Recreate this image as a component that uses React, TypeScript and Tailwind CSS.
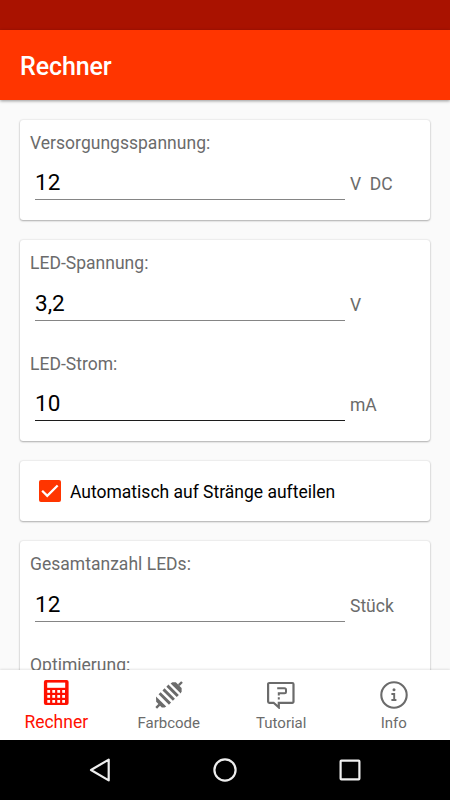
import type { ReactNode } from 'react';

type FieldProps = {
  label: string;
  value: string;
  unit: string;
  focused?: boolean;
};

function Field({ label, value, unit, focused }: FieldProps) {
  return (
    <div className="h-[100.4px] px-2.5 pt-3">
      <p className="h-[22px] text-[17.5px] leading-[22px] tracking-[0.02px] text-[#6b6b6b]">{label}</p>
      <div className="mt-[8.3px] flex items-end">
        <div
          className={`ml-[5px] h-[38px] w-[310px] border-b text-[22.5px] leading-[40px] text-black ${
            focused ? 'border-[#1c1c1c]' : 'border-[#858585]'
          }`}
        >
          {value}
        </div>
        <span className="ml-[5px] mb-[5px] whitespace-pre text-[17.5px] leading-[22px] text-[#6b6b6b]">{unit}</span>
      </div>
    </div>
  );
}

function Card({ children }: { children: ReactNode }) {
  return (
    <section className="shrink-0 rounded-[3px] bg-white shadow-[0_1px_2px_rgba(0,0,0,0.28),0_0_2px_rgba(0,0,0,0.16)]">
      {children}
    </section>
  );
}

function CalculatorIcon() {
  return (
    <svg width="28" height="28" viewBox="0 0 28 28">
      <rect x="1.9" y="2" width="24.7" height="25" rx="2" fill="#ff1000" />
      <rect x="5.2" y="4.6" width="18" height="5.2" fill="#fff" />
      {[12, 17, 22].map(y =>
        [5.3, 10.3, 15.3, 20.2].map(x => <rect key={`${x}-${y}`} x={x} y={y} width="2.8" height="2.8" fill="#fff" />),
      )}
    </svg>
  );
}

function ResistorIcon() {
  return (
    <svg width="28" height="28" viewBox="0 0 28 28" fill="none" stroke="#6b6b6b">
      <path d="M1.2 26.8 4.4 23.6M23.8 4.2 27 1" strokeWidth="2.4" />
      <path d="M1 15.4 11.2 25.6 9.6 26.4H6.8L1.2 20.8Z" fill="#6b6b6b" stroke="none" />
      <path d="M4.6 12.2 15 22.6M8.5 8.4 18.9 18.8M12.4 4.6 22.8 15" strokeWidth="2.9" />
      <path d="M15.6 2.4 17.4 1.2H20.8L26.6 7V10.2L25.8 12.6Z" fill="#6b6b6b" stroke="none" />
    </svg>
  );
}

function TutorialIcon() {
  return (
    <svg width="28" height="28" viewBox="0 0 28 28" fill="none" stroke="#6b6b6b" strokeWidth="2.2">
      <path d="M2.3 2H25.3a1.2 1.2 0 0 1 1.2 1.2v17.4a1.2 1.2 0 0 1-1.2 1.2H11.8V26.4L6.6 21.8H2.3a1.2 1.2 0 0 1-1.2-1.2v-17.4a1.2 1.2 0 0 1 1.2-1.2Z" />
      <path d="M10.2 7.2h7.3q1.5 0 1.5 1.5v2q0 1.5-1.5 1.5h-5.7v2.2M11.8 16.2v2.2" strokeWidth="2" />
    </svg>
  );
}

function InfoIcon() {
  return (
    <svg width="28" height="28" viewBox="0 0 28 28" fill="none" stroke="#6b6b6b" strokeWidth="2.1">
      <circle cx="14" cy="14" r="12.7" />
      <path d="M11.4 13h2.8v6M11.4 19h5" strokeWidth="1.9" />
      <circle cx="14" cy="8.8" r="1.5" fill="#6b6b6b" stroke="none" />
    </svg>
  );
}

const tabs = [
  { label: 'Farbcode', icon: <ResistorIcon /> },
  { label: 'Tutorial', icon: <TutorialIcon /> },
  { label: 'Info', icon: <InfoIcon /> },
];

export default function App() {
  return (
    <div className="flex h-[800px] w-[450px] flex-col overflow-hidden bg-[#fafafa] font-['Roboto',sans-serif]">
      <div className="h-[30px] shrink-0 bg-[#a91200]" />
      <header className="z-10 flex h-[70px] shrink-0 items-center bg-[#ff3500] px-5 pt-1 shadow-[0_1px_3px_rgba(0,0,0,0.4)]">
        <h1 className="text-[25px] font-medium leading-[30px] tracking-[-0.1px] text-white">Rechner</h1>
      </header>

      <main className="flex min-h-0 flex-1 flex-col gap-5 overflow-hidden px-5 pt-5">
        <Card>
          <Field label="Versorgungsspannung:" value="12" unit="V  DC" />
        </Card>
        <Card>
          <Field label="LED-Spannung:" value="3,2" unit="V" />
          <Field label="LED-Strom:" value="10" unit="mA" focused />
        </Card>
        <Card>
          <div className="flex h-[60.3px] items-center pl-[19px]">
            <svg width="22" height="22" viewBox="0 0 23 23">
              <rect width="23" height="23" rx="2" fill="#ff3500" />
              <path d="m3.3 11.2 5.3 5.3L19.5 5.7" fill="none" stroke="#fff" strokeWidth="2.4" />
            </svg>
            <span className="ml-[9px] pt-[2px] text-[17.5px] leading-[22px] text-black">Automatisch auf Stränge aufteilen</span>
          </div>
        </Card>
        <Card>
          <Field label="Gesamtanzahl LEDs:" value="12" unit="Stück" />
          <Field label="Optimierung:" value="" unit="" />
        </Card>
      </main>

      <nav className="z-10 grid h-[70px] shrink-0 grid-cols-4 bg-white shadow-[0_-1px_2px_rgba(0,0,0,0.1)]">
        <div className="flex flex-col items-center pt-2 text-[#ff1000]">
          <CalculatorIcon />
          <span className="mt-[5px] text-[17.5px] leading-[22px]">Rechner</span>
        </div>
        {tabs.map(tab => (
          <div key={tab.label} className="flex flex-col items-center pt-[11px] text-[#6b6b6b]">
            {tab.icon}
            <span className="mt-1 text-[15px] leading-5">{tab.label}</span>
          </div>
        ))}
      </nav>

      <footer className="flex h-[60px] shrink-0 items-center justify-between bg-black px-[88px]">
        <svg width="24" height="24" viewBox="0 0 24 24" fill="none" stroke="#eee" strokeWidth="2.2" strokeLinejoin="round">
          <path d="M20.7 1.6v20.8L3 12Z" />
        </svg>
        <svg width="24" height="24" viewBox="0 0 24 24" fill="none" stroke="#eee" strokeWidth="2.2">
          <circle cx="12" cy="12" r="10.6" />
        </svg>
        <svg width="24" height="24" viewBox="0 0 24 24" fill="none" stroke="#eee" strokeWidth="2.2">
          <rect x="2.6" y="2.6" width="18.8" height="18.8" rx="0.8" />
        </svg>
      </footer>
    </div>
  );
}
